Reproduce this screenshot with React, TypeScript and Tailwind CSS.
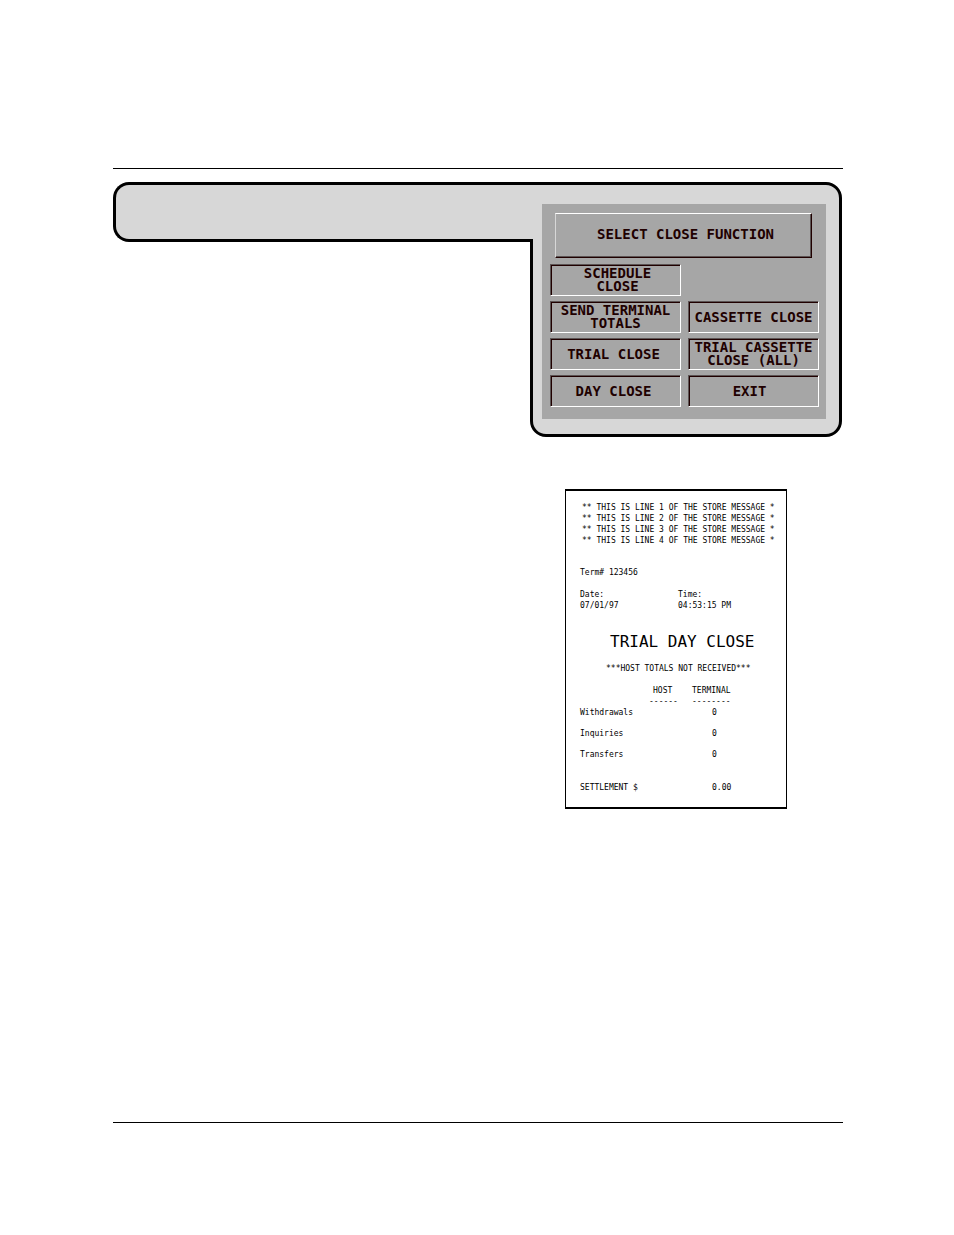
import clsx from 'clsx';

type MenuItem = { lines: string[]; className?: string } | null;

const MENU: MenuItem[] = [
  { lines: ['SCHEDULE', 'CLOSE'], className: 'pl-1' },
  null,
  { lines: ['SEND TERMINAL', 'TOTALS'] },
  { lines: ['CASSETTE CLOSE'] },
  { lines: ['TRIAL CLOSE'], className: 'pr-1' },
  { lines: ['TRIAL CASSETTE', 'CLOSE (ALL)'] },
  { lines: ['DAY CLOSE'], className: 'pr-1' },
  { lines: ['EXIT'], className: 'pr-2' },
];

const MESSAGE_LINES = [1, 2, 3, 4];

const TOTALS = [
  { label: 'Withdrawals', terminal: '0' },
  { label: 'Inquiries', terminal: '0' },
  { label: 'Transfers', terminal: '0' },
];

function MenuButton({ lines, className }: { lines: string[]; className?: string }) {
  return (
    <button
      type="button"
      className={clsx(
        'flex h-8 flex-col items-center justify-center whitespace-nowrap border border-t-[#5c5454] border-l-[#5c5454] border-r-white border-b-white shadow-[inset_1px_1px_0_#200000]',
        className
      )}
    >
      {lines.map((line) => (
        <span key={line} className="block">{line}</span>
      ))}
    </button>
  );
}

function CloseMenu() {
  return (
    <section className="w-[312px] shrink-0 rounded-2xl rounded-tl-none border-3 border-black bg-[#d7d7d7] pt-[19px] pr-[13px] pb-[15px] pl-[9px]">
      <div className="bg-[#a6a6a6] pt-[9px] pr-[7px] pb-3 pl-2 font-['DejaVu_Sans_Mono',monospace] text-[14px] leading-[13px] font-bold text-[#200000]">
        <h1 className="mr-[7px] ml-[5px] flex h-[45px] items-center justify-center border border-t-white border-l-[#d7d7d7] border-r-[#200000] border-b-[#200000] pb-0.5 pl-1 shadow-[inset_-1px_-1px_0_#5c5454]">
          SELECT CLOSE FUNCTION
        </h1>
        <div className="mt-1.5 grid grid-cols-2 gap-x-[7px] gap-y-[5px]">
          {MENU.map((item, i) =>
            item ? <MenuButton key={i} {...item} /> : <div key={i} />
          )}
        </div>
      </div>
    </section>
  );
}

function Receipt() {
  return (
    <section className="mt-[52px] mr-14 ml-auto w-[222px] border-x border-y-2 border-black pt-[11px] pb-[14px] pl-[14px] font-['DejaVu_Sans_Mono',monospace] text-[8px] leading-[11px] whitespace-nowrap text-black">
      {MESSAGE_LINES.map((n) => (
        <p key={n} className="pl-0.5">** THIS IS LINE {n} OF THE STORE MESSAGE *</p>
      ))}

      <p className="mt-[21px]">Term# 123456</p>

      <dl className="mt-[11px] flex">
        <div className="w-[98px]">
          <dt>Date:</dt>
          <dd>07/01/97</dd>
        </div>
        <div>
          <dt>Time:</dt>
          <dd>04:53:15 PM</dd>
        </div>
      </dl>

      <h2 className="mt-[21px] pl-[30px] text-[16px] leading-5">TRIAL DAY CLOSE</h2>
      <p className="mt-[11px] pl-[26px]">***HOST TOTALS NOT RECEIVED***</p>

      <table className="mt-[11px] table-fixed border-collapse text-left">
        <thead>
          <tr>
            <td className="w-[69px] p-0" />
            <th className="w-[43px] p-0 font-normal">
              <span className="block pl-1">HOST</span>
              <span className="block">------</span>
            </th>
            <th className="w-10 p-0 font-normal">
              <span className="block">TERMINAL</span>
              <span className="block">--------</span>
            </th>
          </tr>
        </thead>
        <tbody>
          {TOTALS.map((row) => (
            <tr key={row.label} className="align-top">
              <th className="h-[21px] p-0 font-normal">{row.label}</th>
              <td className="p-0" />
              <td className="p-0 pl-5">{row.terminal}</td>
            </tr>
          ))}
          <tr>
            <th className="p-0 pt-3 font-normal">SETTLEMENT $</th>
            <td className="p-0" />
            <td className="p-0 pt-3 pl-5">0.00</td>
          </tr>
        </tbody>
      </table>
    </section>
  );
}

export default function App() {
  return (
    <div className="flex min-h-screen flex-col bg-white pt-[168px] pr-[111px] pb-28 pl-[113px]">
      <hr className="border-t border-black" />
      <main className="mt-[13px]">
        <div className="flex items-start pr-px">
          {/* overlaps the menu's left edge so both read as one outline */}
          <div className="relative z-10 -mr-[3px] h-[60px] flex-1 rounded-l-2xl border-y-3 border-l-3 border-black bg-[#d7d7d7]" />
          <CloseMenu />
        </div>
        <Receipt />
      </main>
      <hr className="mt-auto border-t border-black" />
    </div>
  );
}
